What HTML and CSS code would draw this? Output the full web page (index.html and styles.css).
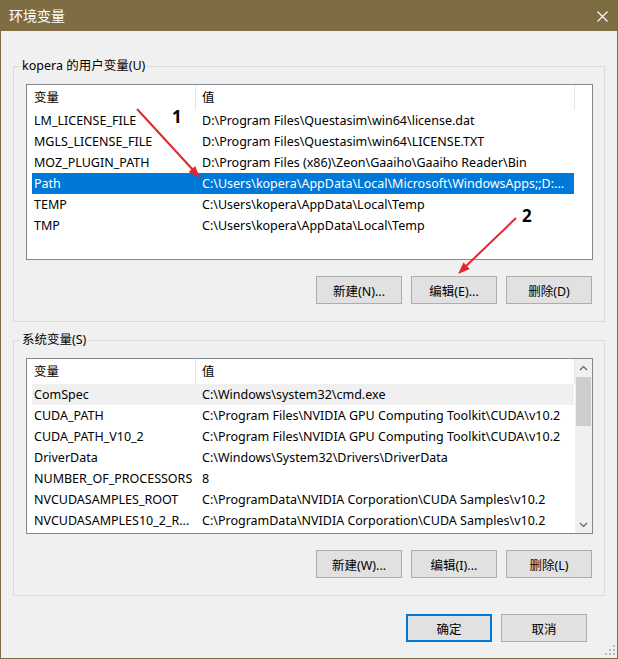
FILE: index.html
```html
<!DOCTYPE html>
<html lang="zh-CN">
<head>
    <meta charset="UTF-8">
    <title>环境变量</title>
    <link rel="stylesheet" href="styles.css">
</head>
<body>
    <div class="window">
        <div class="titlebar">
            <span class="title">环境变量</span>
            <svg class="close" width="11" height="11" viewBox="0 0 11 11">
                <path d="M0.5 0.5 L10.5 10.5 M10.5 0.5 L0.5 10.5" stroke="#fff" stroke-width="1.1" fill="none"/>
            </svg>
        </div>

        <div class="content">
            <div class="group">
                <div class="group-title">kopera 的用户变量(U)</div>
                <div class="listview">
                    <div class="list-main">
                        <div class="list-head">
                            <div class="head-name">变量</div>
                            <div class="head-value">值</div>
                        </div>
                        <div class="row"><span class="cell-name">LM_LICENSE_FILE</span><span class="cell-value">D:\Program Files\Questasim\win64\license.dat</span></div>
                        <div class="row"><span class="cell-name">MGLS_LICENSE_FILE</span><span class="cell-value">D:\Program Files\Questasim\win64\LICENSE.TXT</span></div>
                        <div class="row"><span class="cell-name">MOZ_PLUGIN_PATH</span><span class="cell-value">D:\Program Files (x86)\Zeon\Gaaiho\Gaaiho Reader\Bin</span></div>
                        <div class="row selected"><span class="cell-name">Path</span><span class="cell-value">C:\Users\kopera\AppData\Local\Microsoft\WindowsApps;;D:...</span></div>
                        <div class="row"><span class="cell-name">TEMP</span><span class="cell-value">C:\Users\kopera\AppData\Local\Temp</span></div>
                        <div class="row"><span class="cell-name">TMP</span><span class="cell-value">C:\Users\kopera\AppData\Local\Temp</span></div>
                    </div>
                </div>
                <div class="buttons">
                    <button>新建(N)...</button>
                    <button>编辑(E)...</button>
                    <button>删除(D)</button>
                </div>
            </div>

            <div class="group second">
                <div class="group-title">系统变量(S)</div>
                <div class="listview">
                    <div class="list-main">
                        <div class="list-head">
                            <div class="head-name">变量</div>
                            <div class="head-value">值</div>
                        </div>
                        <div class="row hover"><span class="cell-name">ComSpec</span><span class="cell-value">C:\Windows\system32\cmd.exe</span></div>
                        <div class="row"><span class="cell-name">CUDA_PATH</span><span class="cell-value">C:\Program Files\NVIDIA GPU Computing Toolkit\CUDA\v10.2</span></div>
                        <div class="row"><span class="cell-name">CUDA_PATH_V10_2</span><span class="cell-value">C:\Program Files\NVIDIA GPU Computing Toolkit\CUDA\v10.2</span></div>
                        <div class="row"><span class="cell-name">DriverData</span><span class="cell-value">C:\Windows\System32\Drivers\DriverData</span></div>
                        <div class="row"><span class="cell-name">NUMBER_OF_PROCESSORS</span><span class="cell-value">8</span></div>
                        <div class="row"><span class="cell-name">NVCUDASAMPLES_ROOT</span><span class="cell-value">C:\ProgramData\NVIDIA Corporation\CUDA Samples\v10.2</span></div>
                        <div class="row"><span class="cell-name">NVCUDASAMPLES10_2_R...</span><span class="cell-value">C:\ProgramData\NVIDIA Corporation\CUDA Samples\v10.2</span></div>
                    </div>
                    <div class="scrollbar">
                        <div class="sb-btn">
                            <svg width="9" height="6" viewBox="0 0 9 6"><path d="M1 5 L4.5 1.5 L8 5" stroke="#606060" stroke-width="1.2" fill="none"/></svg>
                        </div>
                        <div class="sb-track"><div class="sb-thumb"></div></div>
                        <div class="sb-btn">
                            <svg width="9" height="6" viewBox="0 0 9 6"><path d="M1 1 L4.5 4.5 L8 1" stroke="#606060" stroke-width="1.2" fill="none"/></svg>
                        </div>
                    </div>
                </div>
                <div class="buttons">
                    <button>新建(W)...</button>
                    <button>编辑(I)...</button>
                    <button>删除(L)</button>
                </div>
            </div>

            <div class="dialog-buttons">
                <button class="default">确定</button>
                <button>取消</button>
            </div>
        </div>

        <!-- marcas vermelhas sobre a captura -->
        <svg class="annotations" width="618" height="659" viewBox="0 0 618 659">
            <line x1="137" y1="109" x2="194" y2="171" stroke="#e3262a" stroke-width="2"/>
            <polygon points="200,178 188.6,172.1 195.2,166.1" fill="#e3262a"/>
            <text x="172" y="123" class="mark">1</text>
            <line x1="516" y1="218" x2="464" y2="268" stroke="#e3262a" stroke-width="2"/>
            <polygon points="458,274 463.5,262.5 469.7,268.9" fill="#e3262a"/>
            <text x="522" y="222" class="mark">2</text>
        </svg>

        <svg class="grip" width="12" height="12" viewBox="0 0 12 12">
            <rect x="8" y="0" width="2" height="2" fill="#b9b9b9"/>
            <rect x="4" y="4" width="2" height="2" fill="#b9b9b9"/>
            <rect x="8" y="4" width="2" height="2" fill="#b9b9b9"/>
            <rect x="0" y="8" width="2" height="2" fill="#b9b9b9"/>
            <rect x="4" y="8" width="2" height="2" fill="#b9b9b9"/>
            <rect x="8" y="8" width="2" height="2" fill="#b9b9b9"/>
        </svg>
    </div>
</body>
</html>
```

FILE: styles.css
```css
/* Janela de diálogo estilo Windows 10 */
body {
    margin: 0;
    font-family: "Noto Sans", "Noto Sans CJK SC", sans-serif;
    font-size: 12.5px;
    color: #000;
}

.window {
    position: relative;
    width: 618px;
    height: 659px;
    box-sizing: border-box;
    border: 1px solid #7e6d43;
    background-color: #f0f0f0;
}

.titlebar {
    height: 30px;
    background-color: #7e6d43;
    display: flex;
    align-items: center;
    justify-content: space-between;
    padding: 0 9px 0 8px;
}

.title {
    color: #fff;
    font-size: 14px;
    line-height: 18px;
}

.close {
    display: block;
    margin-top: 1px;
}

.content {
    padding: 35px 12px 0 12px;
}

.group {
    border: 1px solid #dcdcdc;
    padding: 0 11px 17px 12px;
}

.group.second {
    margin-top: 18px;
}

.group-title {
    width: fit-content;
    margin: -10px 0 0 -6px;
    padding: 0 2px;
    line-height: 18px;
    background-color: #f0f0f0;
}

.listview {
    margin-top: 9px;
    height: 176px;
    box-sizing: border-box;
    border: 1px solid #828790;
    background-color: #fff;
    display: flex;
}

.list-main {
    flex: 1;
    overflow: hidden;
}

.list-head {
    display: flex;
    height: 25px;
}

.head-name, .head-value {
    border-right: 1px solid #e5e5e5;
    line-height: 25px;
    white-space: nowrap;
}

.head-name {
    width: 161px;
    padding-left: 7px;
}

.head-value {
    width: 372px;
    padding-left: 6px;
}

.row {
    display: flex;
    height: 21px;
    line-height: 21px;
    margin-left: 5px;
    width: 542px;
    white-space: nowrap;
}

.row.selected {
    background-color: #0078d7;
    color: #fff;
}

.row.hover {
    background-color: #f0f0f0;
}

.cell-name {
    width: 162px;
    padding-left: 2px;
    overflow: hidden;
}

.cell-value {
    width: 372px;
    padding-left: 6px;
    overflow: hidden;
}

.scrollbar {
    width: 17px;
    background-color: #f0f0f0;
    display: flex;
    flex-direction: column;
}

.sb-btn {
    height: 17px;
    display: flex;
    align-items: center;
    justify-content: center;
}

.sb-track {
    flex: 1;
}

.sb-thumb {
    width: 15px;
    height: 49px;
    margin: 1px auto 0 auto;
    background-color: #cdcdcd;
}

.buttons {
    display: flex;
    justify-content: flex-end;
    gap: 9px;
    margin: 16px 1px 0 0;
}

button {
    width: 86px;
    height: 28px;
    padding: 0;
    background-color: #e1e1e1;
    border: 1px solid #adadad;
    font-family: inherit;
    font-size: 12.5px;
    color: #000;
}

button.default {
    border: 2px solid #0078d7;
}

.dialog-buttons {
    display: flex;
    justify-content: flex-end;
    gap: 9px;
    margin: 18px 18px 0 0;
}

.annotations {
    position: absolute;
    top: -1px;
    left: -1px;
    pointer-events: none;
}

.mark {
    font-family: "Noto Sans", sans-serif;
    font-weight: bold;
    font-size: 17px;
    fill: #000;
}

.grip {
    position: absolute;
    right: 0;
    bottom: 1px;
}
```
